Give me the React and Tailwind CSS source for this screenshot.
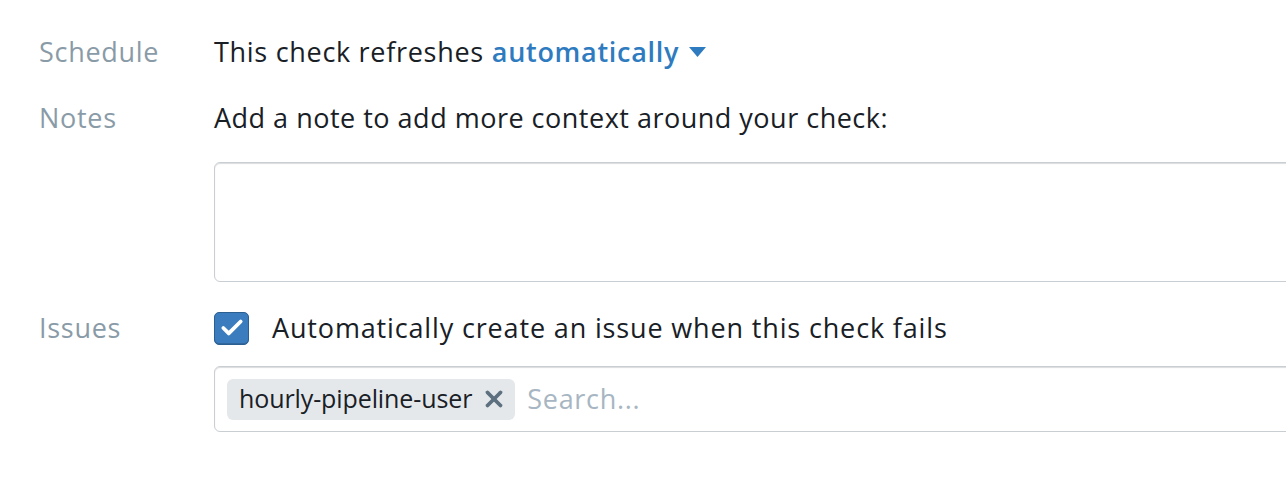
import { Check, X } from 'lucide-react';

export default function App() {
  return (
    <div className="h-[480px] w-full overflow-hidden bg-white pl-[39px] pt-[32px] font-['Open_Sans',sans-serif] text-[27px] tracking-[0.7px] text-[#182026]">
      <div className="flex h-[40px] items-center">
        <div className="w-[175px] text-[#8a9ba8]">Schedule</div>
        <div className="flex items-center">
          <span>This check refreshes</span>
          <span className="ml-[8px] font-semibold text-[#2f7bbf]">automatically</span>
          <svg className="ml-[10px]" width="17" height="10" viewBox="0 0 17 10">
            <path d="M0 0 H17 L8.5 10 Z" fill="#2f7bbf" />
          </svg>
        </div>
      </div>

      <div className="mt-[26px] flex h-[40px] items-center">
        <div className="w-[175px] text-[#8a9ba8]">Notes</div>
        <div className="tracking-[0.5px]">Add a note to add more context around your check:</div>
      </div>

      <div className="ml-[175px] mt-[24px] h-[120px] w-[1200px] rounded-[6px] border border-[#c9ced3] shadow-[inset_0_1px_1px_rgba(16,22,26,0.15)]" />

      <div className="mt-[26px] flex h-[40px] items-center">
        <div className="w-[175px] text-[#8a9ba8]">Issues</div>
        <div className="flex items-center">
          <div className="flex h-[33px] w-[35px] items-center justify-center rounded-[5px] border border-[#2b5f91] bg-[#3a7cbd] shadow-[inset_0_-1px_0_rgba(16,22,26,0.2)]">
            <Check size={26} strokeWidth={3.5} color="white" />
          </div>
          <span className="ml-[23px] tracking-[0.85px]">Automatically create an issue when this check fails</span>
        </div>
      </div>

      <div className="ml-[175px] mt-[18px] flex h-[66px] w-[1200px] items-center rounded-[6px] border border-[#c9ced3] pl-[12px] shadow-[inset_0_1px_1px_rgba(16,22,26,0.15)]">
        <div className="flex h-[41px] items-center rounded-[6px] bg-[#e5e8eb] pl-[12px] pr-[8px] text-[25px] tracking-[-0.1px]">
          <span>hourly-pipeline-user</span>
          <X className="ml-[9px]" size={26} strokeWidth={3.5} color="#5c7080" />
        </div>
        <span className="ml-[12px] text-[#a7b6c2]">Search...</span>
      </div>
    </div>
  );
}
